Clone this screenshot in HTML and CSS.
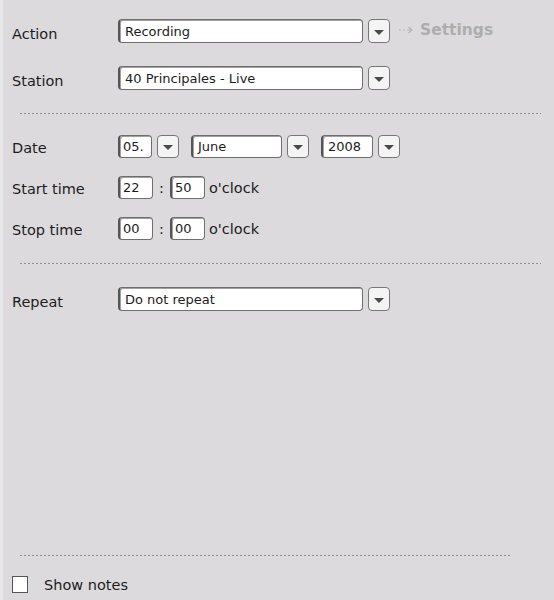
FILE: index.html
```html
<!DOCTYPE html>
<html lang="en">
<head>
  <meta charset="UTF-8" />
  <title>Schedule</title>
  <link rel="stylesheet" href="styles.css">
</head>
<body>
  <div class="panel">
    <!-- Action / station -->
    <div class="row">
      <span class="label">Action</span>
      <span class="field wide">Recording</span>
      <span class="drop"><i></i></span>
      <span class="settings">
        <svg width="16" height="10" viewBox="0 0 16 10">
          <path d="M1 5h2M5 5h2M9 5h4" stroke="#b4b4b4" stroke-width="1.2" fill="none"/>
          <path d="M10.5 2l3.5 3-3.5 3" stroke="#b4b4b4" stroke-width="1.2" fill="none"/>
        </svg>
        Settings
      </span>
    </div>
    <div class="row gap">
      <span class="label">Station</span>
      <span class="field wide">40 Principales - Live</span>
      <span class="drop"><i></i></span>
    </div>

    <div class="sep"></div>

    <!-- Date and times -->
    <div class="row small first">
      <span class="label">Date</span>
      <span class="field day">05.</span>
      <span class="drop"><i></i></span>
      <span class="field month">June</span>
      <span class="drop"><i></i></span>
      <span class="field year">2008</span>
      <span class="drop"><i></i></span>
    </div>
    <div class="row small">
      <span class="label">Start time</span>
      <span class="field time">22</span>
      <span class="colon">:</span>
      <span class="field time">50</span>
      <span class="unit">o'clock</span>
    </div>
    <div class="row small">
      <span class="label">Stop time</span>
      <span class="field time">00</span>
      <span class="colon">:</span>
      <span class="field time">00</span>
      <span class="unit">o'clock</span>
    </div>

    <div class="sep"></div>

    <div class="row gap">
      <span class="label">Repeat</span>
      <span class="field wide">Do not repeat</span>
      <span class="drop"><i></i></span>
    </div>

    <!-- Footer -->
    <div class="footer">
      <div class="sep short"></div>
      <label class="notes">
        <span class="check"></span>
        Show notes
      </label>
    </div>
  </div>
</body>
</html>
```

FILE: styles.css
```css
body {
  margin: 0;
  font-family: "DejaVu Sans", Verdana, sans-serif;
  color: #1c1c1c;
  background-color: #dcdadd;
}
.panel {
  width: 542px;
  height: 581px;
  padding: 19px 0 0 9px;
  border-left: 3px solid #e7e6e8;
  border-right: 3px solid #5a5a5c;
  display: flex;
  flex-direction: column;
}
.row {
  display: flex;
  align-items: center;
  height: 24px;
}
.row.gap {
  margin-top: 23px;
}
.label {
  width: 106px;
  padding-top: 5px;
  font-size: 14.5px;
  flex-shrink: 0;
}
.field {
  box-sizing: border-box;
  height: 24px;
  padding: 0 5px;
  display: flex;
  align-items: center;
  font-size: 13px;
  background-color: #fff;
  border: 1px solid #6e6e6e;
  border-left: 2px solid #555;
  border-radius: 4px;
  box-shadow: inset 1px 1px 0 #a0a0a0;
}
.field.wide {
  width: 245px;
}
.drop {
  box-sizing: border-box;
  width: 22px;
  height: 24px;
  margin-left: 5px;
  display: flex;
  align-items: center;
  justify-content: center;
  background-color: #f4f4f4;
  border: 1px solid #777;
  border-radius: 4px;
}
.drop i {
  width: 0;
  height: 0;
  border-left: 5px solid transparent;
  border-right: 5px solid transparent;
  border-top: 5px solid #4a4a4a;
  margin-top: 2px;
}
.settings {
  margin-left: 8px;
  display: flex;
  align-items: center;
  gap: 6px;
  color: #adadad;
  font-size: 15.5px;
  font-weight: bold;
  margin-top: -3px;
}
.sep {
  height: 1px;
  width: 521px;
  margin: 23px 0 0 8px;
  background: repeating-linear-gradient(to right, #8e8e90 0 2px, transparent 2px 4px);
}
.sep.short {
  width: 491px;
  margin-top: 0;
}
.row.small {
  height: 23px;
  margin-top: 18px;
}
.row.small.first {
  margin-top: 21px;
}
.row.small .field,
.row.small .drop {
  height: 23px;
}
.row.small .label {
  padding-top: 2px;
}
.field.day {
  width: 34px;
  padding-left: 3px;
}
.field.month {
  width: 91px;
  margin-left: 12px;
}
.field.year {
  width: 52px;
  margin-left: 12px;
}
.field.time {
  width: 35px;
  padding-left: 3px;
}
.colon {
  width: 17px;
  text-align: center;
  font-size: 14.5px;
}
.unit {
  margin-left: 4px;
  font-size: 14.5px;
}
.footer {
  margin-top: auto;
  padding-bottom: 7px;
}
.notes {
  display: flex;
  align-items: center;
  gap: 16px;
  margin: 20px 0 0 0;
  font-size: 14.5px;
}
.check {
  box-sizing: border-box;
  width: 16px;
  height: 17px;
  background-color: #fff;
  border: 1px solid #555;
}
```
